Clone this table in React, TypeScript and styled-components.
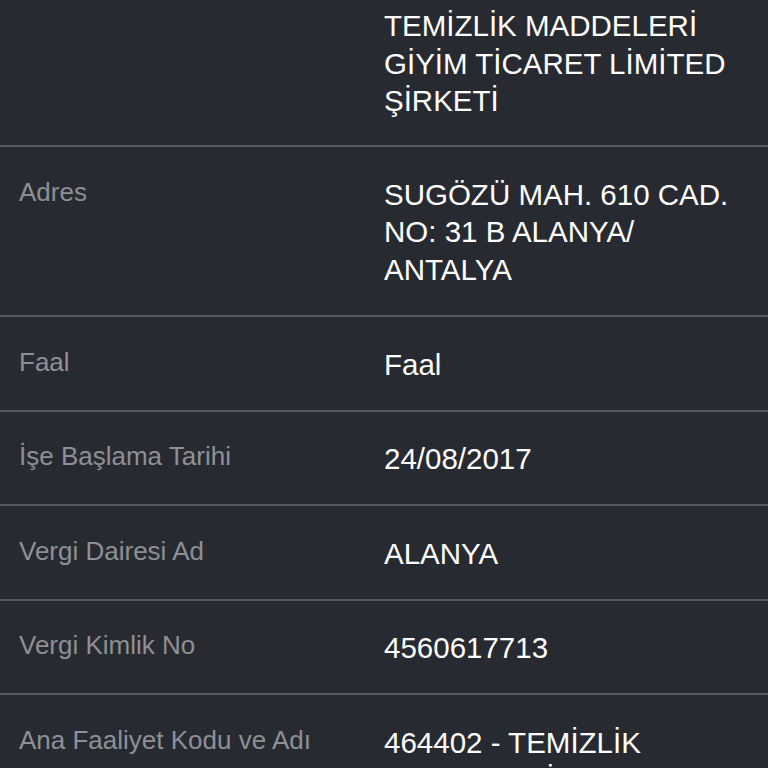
import React from "react";
import styled, { createGlobalStyle } from "styled-components";

const GlobalStyle = createGlobalStyle`
  html, body {
    margin: 0;
    padding: 0;
    background: #272a31;
    overflow: hidden;
  }
  body {
    font-family: "Liberation Sans", Arial, Helvetica, sans-serif;
  }
`;

const Page = styled.div`
  width: 768px;
  height: 768px;
  background: #272a31;
  overflow: hidden;
  display: flex;
  flex-direction: column;
`;

const Row = styled.div<{ $top?: number; $bottom?: number }>`
  display: grid;
  grid-template-columns: 365px 1fr;
  padding: ${(p) => p.$top ?? 28.5}px 19px ${(p) => p.$bottom ?? 26.3}px 19px;
  border-bottom: 2px solid #55585e;
  flex-shrink: 0;
`;

const Label = styled.div`
  color: #8e9096;
  font-size: 26px;
  line-height: 32px;
`;

const Value = styled.div`
  color: #ffffff;
  font-size: 29.5px;
  line-height: 37.7px;
`;

type Item = { label: string; value: string; top?: number; bottom?: number };

const items: Item[] = [
  { label: "", value: "TEMİZLİK MADDELERİ GİYİM TİCARET LİMİTED ŞİRKETİ", top: 7, bottom: 25 },
  { label: "Adres", value: "SUGÖZÜ MAH. 610 CAD. NO: 31 B ALANYA/ ANTALYA" },
  { label: "Faal", value: "Faal" },
  { label: "İşe Başlama Tarihi", value: "24/08/2017" },
  { label: "Vergi Dairesi Ad", value: "ALANYA" },
  { label: "Vergi Kimlik No", value: "4560617713" },
  { label: "Ana Faaliyet Kodu ve Adı", value: "464402 - TEMİZLİK MALZEMESİ TOPTAN TİCARETİ" },
];

export default function App() {
  return (
    <>
      <GlobalStyle />
      <Page>
        {items.map((it, i) => (
          <Row key={i} $top={it.top} $bottom={it.bottom}>
            <Label>{it.label}</Label>
            <Value>{it.value}</Value>
          </Row>
        ))}
      </Page>
    </>
  );
}
